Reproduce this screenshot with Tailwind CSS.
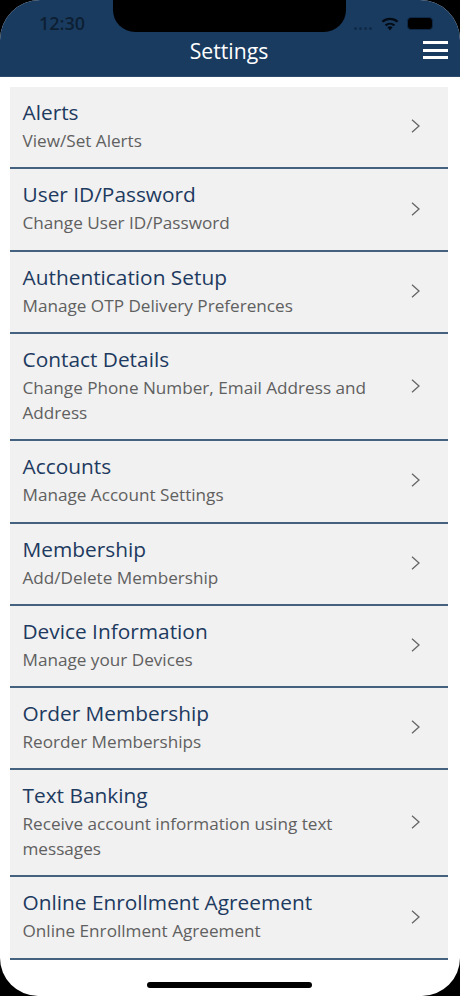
<!DOCTYPE html>
<html><head><meta charset="utf-8"><script src="https://cdn.jsdelivr.net/npm/@tailwindcss/browser@4"></script></head>
<body class="bg-black">
<div class="relative w-[460px] h-[996px] overflow-hidden bg-black font-['Open_Sans',sans-serif]">
<div class="relative h-[996px] w-[460px] rounded-t-[40px] rounded-b-[38px] bg-white overflow-hidden flex flex-col">
  <header class="h-[77px] shrink-0 bg-[#1a3b60] flex items-end justify-center pb-[11.5px] pr-[2px] border-b border-[#2b4a6c]">
    <span class="text-white text-[21.2px] leading-[28px]">Settings</span>
  </header>
  <main class="mt-[10.1px] ml-[10px] w-[438px] bg-[#f1f1f1]">
    <a class="h-[82.3px] flex items-center justify-between pl-[12.5px] pr-[28.5px] border-b-2 border-[#44627f]"><div class="pb-[3.4px]"><div class="text-[#1d3a60] text-[20.85px] leading-[28px]">Alerts</div><div class="text-[#606060] text-[17.15px] leading-[25px] mt-[2px]">View/Set Alerts</div></div><svg class="w-[9px] h-[14px] shrink-0 mb-[2px]" viewBox="0 0 9 14" fill="none" stroke="#666" stroke-width="1.3"><path d="M1 .8l7 6.2-7 6.2"/></svg></a>
    <a class="h-[82.3px] flex items-center justify-between pl-[12.5px] pr-[28.5px] border-b-2 border-[#44627f]"><div class="pb-[3.4px]"><div class="text-[#1d3a60] text-[20.85px] leading-[28px]">User ID/Password</div><div class="text-[#606060] text-[17.15px] leading-[25px] mt-[2px]">Change User ID/Password</div></div><svg class="w-[9px] h-[14px] shrink-0 mb-[2px]" viewBox="0 0 9 14" fill="none" stroke="#666" stroke-width="1.3"><path d="M1 .8l7 6.2-7 6.2"/></svg></a>
    <a class="h-[82.6px] flex items-center justify-between pl-[12.5px] pr-[28.5px] border-b-2 border-[#44627f]"><div class="pb-[3.4px]"><div class="text-[#1d3a60] text-[20.85px] leading-[28px]">Authentication Setup</div><div class="text-[#606060] text-[17.15px] leading-[25px] mt-[2px]">Manage OTP Delivery Preferences</div></div><svg class="w-[9px] h-[14px] shrink-0 mb-[2px]" viewBox="0 0 9 14" fill="none" stroke="#666" stroke-width="1.3"><path d="M1 .8l7 6.2-7 6.2"/></svg></a>
    <a class="h-[107px] flex items-center justify-between pl-[12.5px] pr-[28.5px] border-b-2 border-[#44627f]"><div class="w-[360px] pb-[3.4px]"><div class="text-[#1d3a60] text-[20.85px] leading-[28px]">Contact Details</div><div class="text-[#606060] text-[17.15px] leading-[25px] mt-[2px]">Change Phone Number, Email Address and Address</div></div><svg class="w-[9px] h-[14px] shrink-0 mb-[2px]" viewBox="0 0 9 14" fill="none" stroke="#666" stroke-width="1.3"><path d="M1 .8l7 6.2-7 6.2"/></svg></a>
    <a class="h-[82.3px] flex items-center justify-between pl-[12.5px] pr-[28.5px] border-b-2 border-[#44627f]"><div class="pb-[3.4px]"><div class="text-[#1d3a60] text-[20.85px] leading-[28px]">Accounts</div><div class="text-[#606060] text-[17.15px] leading-[25px] mt-[2px]">Manage Account Settings</div></div><svg class="w-[9px] h-[14px] shrink-0 mb-[2px]" viewBox="0 0 9 14" fill="none" stroke="#666" stroke-width="1.3"><path d="M1 .8l7 6.2-7 6.2"/></svg></a>
    <a class="h-[82.3px] flex items-center justify-between pl-[12.5px] pr-[28.5px] border-b-2 border-[#44627f]"><div class="pb-[3.4px]"><div class="text-[#1d3a60] text-[20.85px] leading-[28px]">Membership</div><div class="text-[#606060] text-[17.15px] leading-[25px] mt-[2px]">Add/Delete Membership</div></div><svg class="w-[9px] h-[14px] shrink-0 mb-[2px]" viewBox="0 0 9 14" fill="none" stroke="#666" stroke-width="1.3"><path d="M1 .8l7 6.2-7 6.2"/></svg></a>
    <a class="h-[82.3px] flex items-center justify-between pl-[12.5px] pr-[28.5px] border-b-2 border-[#44627f]"><div class="pb-[3.4px]"><div class="text-[#1d3a60] text-[20.85px] leading-[28px]">Device Information</div><div class="text-[#606060] text-[17.15px] leading-[25px] mt-[2px]">Manage your Devices</div></div><svg class="w-[9px] h-[14px] shrink-0 mb-[2px]" viewBox="0 0 9 14" fill="none" stroke="#666" stroke-width="1.3"><path d="M1 .8l7 6.2-7 6.2"/></svg></a>
    <a class="h-[82.3px] flex items-center justify-between pl-[12.5px] pr-[28.5px] border-b-2 border-[#44627f]"><div class="pb-[3.4px]"><div class="text-[#1d3a60] text-[20.85px] leading-[28px]">Order Membership</div><div class="text-[#606060] text-[17.15px] leading-[25px] mt-[2px]">Reorder Memberships</div></div><svg class="w-[9px] h-[14px] shrink-0 mb-[2px]" viewBox="0 0 9 14" fill="none" stroke="#666" stroke-width="1.3"><path d="M1 .8l7 6.2-7 6.2"/></svg></a>
    <a class="h-[107px] flex items-center justify-between pl-[12.5px] pr-[28.5px] border-b-2 border-[#44627f]"><div class="w-[360px] pb-[3.4px]"><div class="text-[#1d3a60] text-[20.85px] leading-[28px]">Text Banking</div><div class="text-[#606060] text-[17.15px] leading-[25px] mt-[2px]">Receive account information using text messages</div></div><svg class="w-[9px] h-[14px] shrink-0 mb-[2px]" viewBox="0 0 9 14" fill="none" stroke="#666" stroke-width="1.3"><path d="M1 .8l7 6.2-7 6.2"/></svg></a>
    <a class="h-[82.3px] flex items-center justify-between pl-[12.5px] pr-[28.5px] border-b-2 border-[#44627f]"><div class="pb-[3.4px]"><div class="text-[#1d3a60] text-[20.85px] leading-[28px]">Online Enrollment Agreement</div><div class="text-[#606060] text-[17.15px] leading-[25px] mt-[2px]">Online Enrollment Agreement</div></div><svg class="w-[9px] h-[14px] shrink-0 mb-[2px]" viewBox="0 0 9 14" fill="none" stroke="#666" stroke-width="1.3"><path d="M1 .8l7 6.2-7 6.2"/></svg></a>
  </main>
  <div class="absolute bottom-[8px] left-[147px] w-[165px] h-[6px] rounded-full bg-black"></div>
</div>
<div class="absolute top-0 left-[113px] w-[233px] h-[32px] bg-black rounded-b-[22px]"></div>
<span class="absolute top-[11px] left-[39px] text-[18px] leading-[24px] font-semibold text-[#0c1f33]">12:30</span>
<div class="absolute top-[27px] left-[354px] flex gap-[2px]"><i class="w-[3px] h-[3px] rounded-full bg-[#0f2a48]"></i><i class="w-[3px] h-[3px] rounded-full bg-[#0f2a48]"></i><i class="w-[3px] h-[3px] rounded-full bg-[#0f2a48]"></i><i class="w-[3px] h-[3px] rounded-full bg-[#0f2a48]"></i></div>
<svg class="absolute top-[17px] left-[381px] w-[18px] h-[14px]" viewBox="0 0 18 14" fill="#030b14"><path d="M9 13.5l2.6-3.2a4 4 0 0 0-5.2 0z"/><path d="M3.8 7.6l1.5 1.6a5.6 5.6 0 0 1 7.4 0l1.5-1.6a8 8 0 0 0-10.4 0z"/><path d="M.6 3.9l1.6 1.7a10.2 10.2 0 0 1 13.6 0l1.6-1.7a12.6 12.6 0 0 0-16.8 0z"/></svg>
<div class="absolute top-[17px] left-[407px] w-[26px] h-[13px] rounded-[4px] bg-black border border-[#0f2a48]"></div>
<div class="absolute top-[41px] left-[422.5px] w-[25.5px] flex flex-col gap-[4.5px]"><i class="h-[3px] bg-white block"></i><i class="h-[3px] bg-white block"></i><i class="h-[3px] bg-white block"></i></div>
</div>
</body></html>
